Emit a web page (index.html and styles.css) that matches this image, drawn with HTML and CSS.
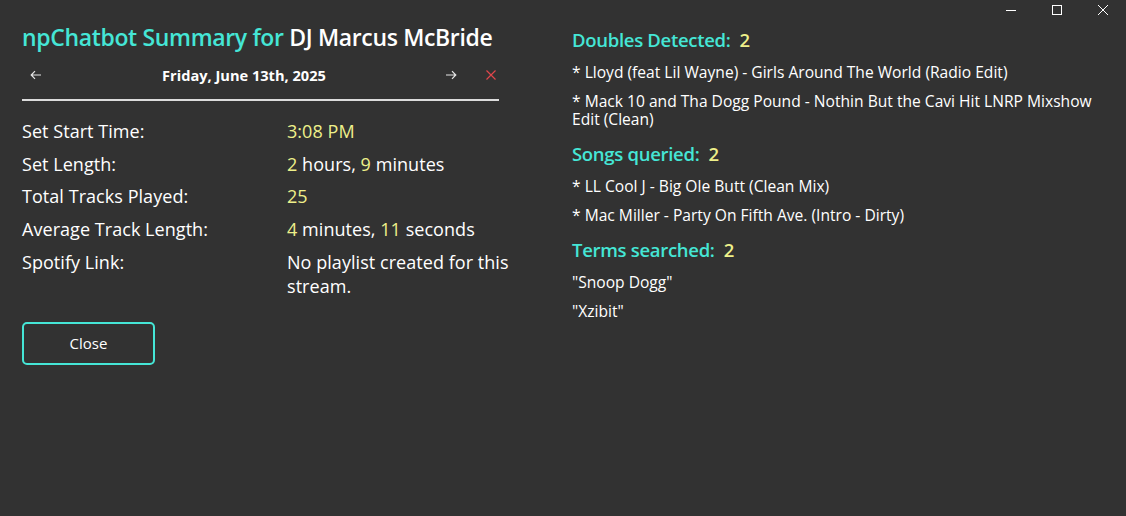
FILE: index.html
```html
<!DOCTYPE html>
<html>
<head>
<meta charset="utf-8">
<link rel="stylesheet" href="styles.css">
</head>
<body>
<div class="winctl">
  <svg class="wc" width="12" height="12" viewBox="0 0 12 12"><path d="M1 6.5H11" stroke="#fff" stroke-width="1"/></svg>
  <svg class="wc" width="12" height="12" viewBox="0 0 12 12"><rect x="1.5" y="1.5" width="9" height="9" fill="none" stroke="#fff" stroke-width="1"/></svg>
  <svg class="wc" width="12" height="12" viewBox="0 0 12 12"><path d="M1 1L11 11M11 1L1 11" stroke="#fff" stroke-width="1"/></svg>
</div>
<div class="page">
  <section class="left">
    <h1 class="title"><span class="teal">npChatbot Summary for</span> DJ Marcus McBride</h1>
    <div class="nav">
      <svg class="arrow" width="12" height="10" viewBox="0 0 12 10"><path d="M11 5H1.5M5 1.2L1.2 5L5 8.8" fill="none" stroke="#e6e6e6" stroke-width="1.2"/></svg>
      <div class="date">Friday, June 13th, 2025</div>
      <svg class="arrow" width="12" height="10" viewBox="0 0 12 10"><path d="M1 5H10.5M7 1.2L10.8 5L7 8.8" fill="none" stroke="#e6e6e6" stroke-width="1.2"/></svg>
      <svg class="xicon" width="10" height="10" viewBox="0 0 10 10"><path d="M0.5 0.5L9.5 9.5M9.5 0.5L0.5 9.5" stroke="#e0464b" stroke-width="1.2"/></svg>
    </div>
    <div class="rule"></div>
    <div class="stats">
      <div class="label">Set Start Time:</div><div class="val"><span class="yel">3:08 PM</span></div>
      <div class="label">Set Length:</div><div class="val"><span class="yel">2</span> hours, <span class="yel">9</span> minutes</div>
      <div class="label">Total Tracks Played:</div><div class="val"><span class="yel">25</span></div>
      <div class="label">Average Track Length:</div><div class="val"><span class="yel">4</span> minutes, <span class="yel">11</span> seconds</div>
      <div class="label">Spotify Link:</div><div class="val">No playlist created for this stream.</div>
    </div>
    <button class="close">Close</button>
  </section>
  <section class="right">
    <h2 class="head">Doubles Detected:&nbsp; <span class="yel">2</span></h2>
    <p class="item">* Lloyd (feat Lil Wayne) - Girls Around The World (Radio Edit)</p>
    <p class="item">* Mack 10 and Tha Dogg Pound - Nothin But the Cavi Hit LNRP Mixshow Edit (Clean)</p>
    <h2 class="head">Songs queried:&nbsp; <span class="yel">2</span></h2>
    <p class="item">* LL Cool J - Big Ole Butt (Clean Mix)</p>
    <p class="item">* Mac Miller - Party On Fifth Ave. (Intro - Dirty)</p>
    <h2 class="head">Terms searched:&nbsp; <span class="yel">2</span></h2>
    <p class="item">"Snoop Dogg"</p>
    <p class="item">"Xzibit"</p>
  </section>
</div>
</body>
</html>
```

FILE: styles.css
```css
html, body {
  margin: 0;
  padding: 0;
  background: #323232;
  color: #ffffff;
  font-family: "Open Sans", "Noto Sans", sans-serif;
  height: 100%;
}
.winctl {
  position: absolute;
  top: 4px;
  right: 17px;
  display: flex;
  gap: 34px;
}
.wc { display: block; }
.page {
  display: flex;
  padding: 22px 0 0 22px;
}
.left {
  width: 500px;
  flex: none;
}
.title {
  margin: 0;
  font-size: 23px;
  font-weight: 600;
  line-height: 30px;
  letter-spacing: -0.35px;
  white-space: nowrap;
}
.teal { color: #45e6d6; }
.yel { color: #eef08a; }
.nav {
  width: 477px;
  display: flex;
  align-items: center;
  height: 32px;
  margin-top: 7px;
}
.arrow { margin-left: 8px; flex: none; }
.date {
  flex: 1;
  text-align: center;
  font-weight: 700;
  font-size: 14.6px;
  letter-spacing: 0;
  padding-left: 9px;
}
.xicon { margin-left: 29px; margin-right: 3px; flex: none; }
.rule {
  width: 477px;
  height: 2px;
  background: #dcdcdc;
  margin-top: 8px;
}
.stats {
  display: grid;
  grid-template-columns: 265px 240px;
  row-gap: 8.7px;
  margin-top: 18px;
  font-size: 18px;
  line-height: 24px;
  letter-spacing: 0.05px;
}
.val { color: #ffffff; }
.close {
  margin-top: 24.5px;
  width: 133px;
  height: 43px;
  background: transparent;
  border: 2px solid #45e6d6;
  border-radius: 5px;
  color: #ffffff;
  font-family: inherit;
  font-size: 15px;
  padding: 0 0 2px;
}
.right {
  margin-left: 50px;
  width: 520px;
  padding-top: 6px;
}
.head {
  margin: 0 0 10.5px;
  font-size: 18.5px;
  font-weight: 600;
  line-height: 24px;
  color: #45e6d6;
  letter-spacing: -0.3px;
}
.item {
  margin: 0 0 11px;
  font-size: 15.6px;
  line-height: 18px;
  letter-spacing: 0;
}
.item + .head { margin-top: 14.5px; }
```
